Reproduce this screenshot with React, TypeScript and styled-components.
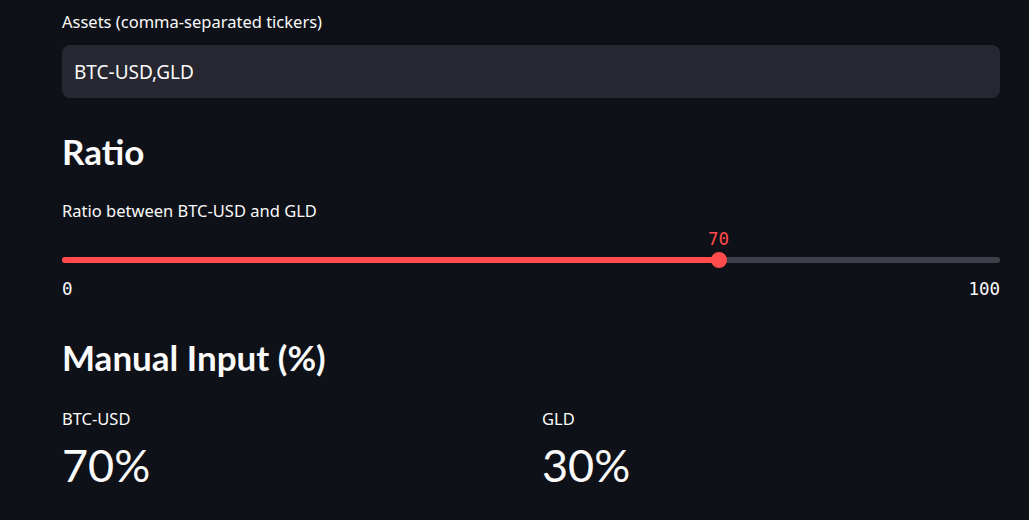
import styled, { createGlobalStyle } from "styled-components";

const GlobalStyle = createGlobalStyle`
    body {
        margin: 0;
        background: #0e1117;
        color: #fafafa;
        font-family: "Noto Sans", "Open Sans", sans-serif;
    }
`

const assets = ["BTC-USD", "GLD"];
const ratio = 70;

export default function App() {
    return (
        <>
            <GlobalStyle />
            <Main>
                <Label>Assets (comma-separated tickers)</Label>
                <Input defaultValue={assets.join(",")} />

                <Heading $top={31}>Ratio</Heading>
                <Label $top={28}>Ratio between {assets[0]} and {assets[1]}</Label>
                <Slider>
                    <ValueRow>
                        <Value style={{ left: `${ratio}%` }}>{ratio}</Value>
                    </ValueRow>
                    <Track>
                        <Fill style={{ width: `${ratio}%` }} />
                        <Thumb style={{ left: `${ratio}%` }} />
                    </Track>
                    <Ticks>
                        <span>0</span>
                        <span>100</span>
                    </Ticks>
                </Slider>

                <Heading $top={36}>Manual Input (%)</Heading>
                <Columns>
                    <Metric>
                        <MetricLabel>{assets[0]}</MetricLabel>
                        <MetricValue>{ratio}%</MetricValue>
                    </Metric>
                    <Metric>
                        <MetricLabel>{assets[1]}</MetricLabel>
                        <MetricValue>{100 - ratio}%</MetricValue>
                    </Metric>
                </Columns>
            </Main>
        </>
    )
}

const Main = styled.div`
    width: 938px;
    padding: 12px 29px 0 62px;
    display: flex;
    flex-direction: column;
`

const Label = styled.div<{ $top?: number }>`
    font-size: 16.5px;
    line-height: 20px;
    margin-top: ${p => p.$top ?? 0}px;
`

const Input = styled.input`
    margin-top: 13px;
    height: 53px;
    box-sizing: border-box;
    border: 0;
    border-radius: 8px;
    background: #262730;
    color: #fafafa;
    padding: 0 12px;
    font-family: inherit;
    font-size: 19px;
    outline: none;
`

const Heading = styled.h2<{ $top: number }>`
    margin: ${p => p.$top}px 0 0;
    font-family: Lato, "Noto Sans", sans-serif;
    font-size: 35px;
    line-height: 44px;
    font-weight: 700;
`

const Slider = styled.div`
    display: flex;
    flex-direction: column;
    font-family: "DejaVu Sans Mono", monospace;
    font-size: 17.5px;
`

const ValueRow = styled.div`
    position: relative;
    height: 24px;
    margin-top: 6px;
`

const Value = styled.span`
    position: absolute;
    top: 2px;
    transform: translateX(-50%);
    color: #ff4b4b;
`

const Track = styled.div`
    position: relative;
    height: 6px;
    margin-top: 6px;
    border-radius: 3px;
    background: #3e4049;
`

const Fill = styled.div`
    height: 100%;
    border-radius: 3px;
    background: #ff4b4b;
`

const Thumb = styled.div`
    position: absolute;
    top: 50%;
    width: 16px;
    height: 16px;
    border-radius: 50%;
    background: #ff4b4b;
    transform: translate(-50%, -50%);
`

const Ticks = styled.div`
    display: flex;
    justify-content: space-between;
    margin-top: 16px;
    line-height: 20px;
`

const Columns = styled.div`
    display: grid;
    grid-template-columns: 1fr 1fr;
    gap: 22px;
    margin-top: 30px;
`

const Metric = styled.div`
    display: flex;
    flex-direction: column;
`

const MetricLabel = styled.div`
    font-size: 16.5px;
    line-height: 20px;
`

const MetricValue = styled.div`
    margin-top: 8px;
    font-family: Lato, "Noto Sans", sans-serif;
    font-size: 45px;
    line-height: 56px;
    font-weight: 400;
`
